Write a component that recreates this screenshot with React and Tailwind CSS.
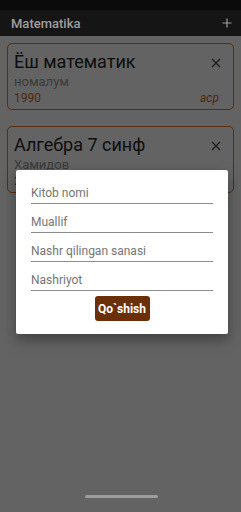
const books = [
  { id: 1, title: 'Ёш математик', author: 'номалум', year: '1990', era: 'аср' },
  { id: 2, title: 'Алгебра 7 синф', author: 'Хамидов', year: '2017', era: 'аср' },
]

const fields = ['Kitob nomi', 'Muallif', 'Nashr qilingan sanasi', 'Nashriyot']

const CloseIcon = () => (
  <svg width="10" height="10" viewBox="0 0 10 10" className="text-[#1c1c1c]">
    <path d="M1 1 L9 9 M9 1 L1 9" stroke="currentColor" strokeWidth="1.3" fill="none" />
  </svg>
)

export default function App() {
  return (
    <div className="relative w-[241px] h-[512px] overflow-hidden bg-[#636363] font-['Roboto',sans-serif]">
      {/* status bar */}
      <div className="h-[10px] bg-[#0b0b0b]" />

      {/* app bar */}
      <header className="h-[26px] bg-[#151515] flex items-center justify-between pl-[11px] pr-[9px]">
        <span className="text-[13px] font-medium text-[#9f9f9f] leading-none">Matematika</span>
        <svg width="10" height="10" viewBox="0 0 10 10" className="text-[#a0a0a0]">
          <path d="M5 0.5 V9.5 M0.5 5 H9.5" stroke="currentColor" strokeWidth="1.2" fill="none" />
        </svg>
      </header>

      {/* list */}
      <div className="flex flex-col gap-[16px] px-[7px] pt-[7px]">
        {books.map((b) => (
          <div key={b.id} className="h-[67px] border border-[#5a2d0d] rounded-[5px] pl-[6px] pr-[12px] pt-[6px] flex flex-col">
            <div className="flex items-start justify-between">
              <span className="text-[18px] leading-[24px] text-[#0e0e0e]">{b.title}</span>
              <span className="mt-[8px]"><CloseIcon /></span>
            </div>
            <span className="text-[13px] leading-[16px] text-[#3a3a3a]">{b.author}</span>
            <div className="flex items-end justify-between">
              <span className="text-[12px] leading-[16px] text-[#4f290b]">{b.year}</span>
              <span className="text-[12px] leading-[16px] italic text-[#4f290b] pr-[2px]">{b.era}</span>
            </div>
          </div>
        ))}
      </div>

      {/* dialog */}
      <div className="absolute left-[16px] top-[170px] w-[212px] h-[164px] bg-white rounded-[2px] shadow-[0_6px_14px_rgba(0,0,0,0.35)] px-[15px] pt-[5px] flex flex-col">
        {fields.map((f) => (
          <div key={f} className="h-[29px] flex flex-col justify-end">
            <span className="text-[12px] leading-[14px] text-[#757575] pb-[3px]">{f}</span>
            <div className="h-px bg-[#8c8c8c]" />
          </div>
        ))}
        <div className="flex justify-center mt-[5px]">
          <button className="w-[55px] h-[25px] rounded-[3px] bg-[#6b2f09] text-white text-[12px] font-bold leading-none">
            Qo`shish
          </button>
        </div>
      </div>

      {/* gesture bar */}
      <div className="absolute left-[85px] top-[495px] w-[73px] h-[3px] rounded-full bg-[#9c9c9c]" />
    </div>
  )
}
